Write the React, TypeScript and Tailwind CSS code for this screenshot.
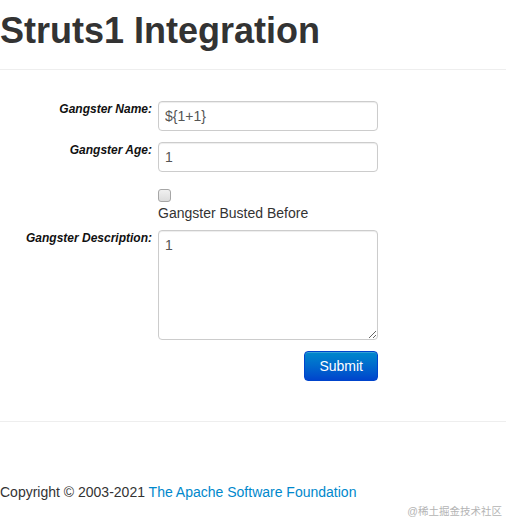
export default function App() {
  return (
    <div
      className="relative h-[519px] overflow-hidden bg-white text-[#333]"
      style={{ fontFamily: '"Liberation Sans", Arial, sans-serif' }}
    >
      {/* Header */}
      <h1 className="mt-[11px] text-[36px] font-bold leading-[40px] text-[#333]">Struts1 Integration</h1>
      <hr className="mt-[18px] border-0 border-t border-[#eee]" />

      {/* Form */}
      <form className="mt-[31px] flex flex-col" onSubmit={(e) => e.preventDefault()}>
        <div className="flex gap-[6px]">
          <label className="w-[152px] text-right text-[12px] font-bold italic leading-[16px] text-[#111]">
            Gangster Name:
          </label>
          <input
            defaultValue="${1+1}"
            className="h-[30px] w-[220px] rounded-[4px] border border-[#ccc] px-[6px] py-[4px] text-[14px] leading-[20px] text-[#555] outline-none shadow-[inset_0_1px_1px_rgba(0,0,0,0.075)]"
          />
        </div>

        <div className="mt-[11px] flex gap-[6px]">
          <label className="w-[152px] text-right text-[12px] font-bold italic leading-[16px] text-[#111]">
            Gangster Age:
          </label>
          <input
            defaultValue="1"
            className="h-[30px] w-[220px] rounded-[4px] border border-[#ccc] px-[6px] py-[4px] text-[14px] leading-[20px] text-[#555] outline-none shadow-[inset_0_1px_1px_rgba(0,0,0,0.075)]"
          />
        </div>

        <div className="mt-[17px] flex gap-[6px]">
          <div className="w-[152px]" />
          <div className="flex flex-col">
            <span className="block h-[13px] w-[13px] rounded-[3px] border border-[#a6a6a6] bg-gradient-to-b from-[#f0f0f0] to-[#dcdcdc]" />
            <span className="mt-[1px] text-[14px] leading-[20px] text-[#333]">Gangster Busted Before</span>
          </div>
        </div>

        <div className="mt-[7px] flex gap-[6px]">
          <label className="w-[152px] text-right text-[12px] font-bold italic leading-[16px] text-[#111]">
            Gangster Description:
          </label>
          <textarea
            defaultValue="1"
            className="h-[110px] w-[220px] rounded-[4px] border border-[#ccc] px-[6px] py-[4px] text-[14px] leading-[20px] text-[#555] outline-none shadow-[inset_0_1px_1px_rgba(0,0,0,0.075)]"
          />
        </div>

        <div className="mt-[11px] flex gap-[6px]">
          <div className="w-[152px]" />
          <div className="flex w-[220px] justify-end">
            <button
              type="submit"
              className="h-[30px] rounded-[4px] border border-[#0044cc] bg-gradient-to-b from-[#0088cc] to-[#0044cc] px-[14px] text-[14px] leading-[20px] text-white shadow-[inset_0_1px_0_rgba(255,255,255,0.2)]"
            >
              Submit
            </button>
          </div>
        </div>
      </form>

      <hr className="mt-[40px] border-0 border-t border-[#eee]" />

      {/* Footer */}
      <footer className="mt-[60px] text-[14px] leading-[20px] text-[#333]">
        Copyright © 2003-2021 <a className="text-[#0088cc]">The Apache Software Foundation</a>
      </footer>

      {/* Watermark */}
      <div
        className="absolute right-[4px] top-[504px] text-[10.5px] leading-[14px] text-[#b4b4b4]"
        style={{ fontFamily: '"Liberation Sans", "Noto Sans CJK SC", sans-serif' }}
      >
        @稀土掘金技术社区
      </div>
    </div>
  );
}
